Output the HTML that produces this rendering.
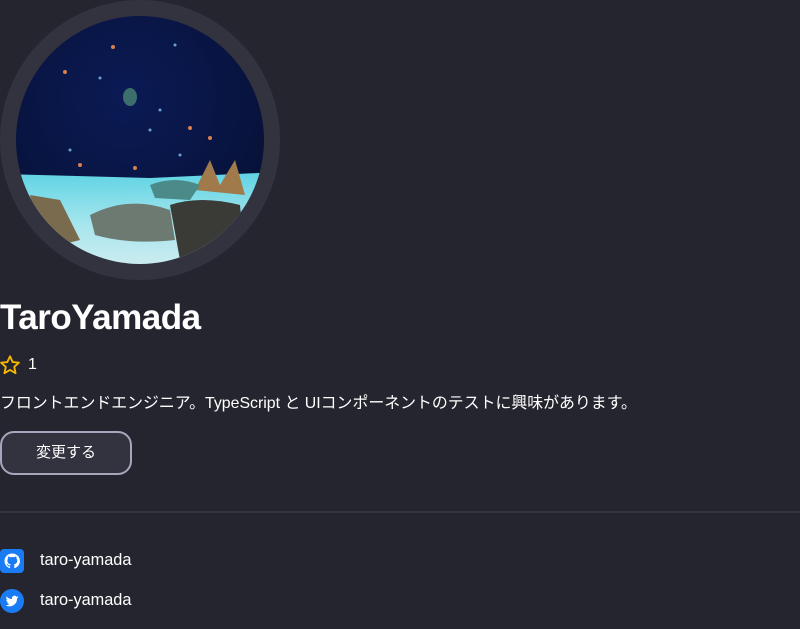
<!DOCTYPE html>
<html><head><meta charset="utf-8"><style>
html,body{margin:0;padding:0;background:#25252f;width:800px;height:629px;overflow:hidden;color:#fff;font-family:"Liberation Sans","Noto Sans CJK JP",sans-serif}
.av{position:absolute;left:0;top:0;width:280px;height:280px}
h1{position:absolute;left:0;top:296px;margin:0;font-size:35px;font-weight:bold;letter-spacing:-0.5px;line-height:44px}
.star{position:absolute;left:-1px;top:354px}
.cnt{position:absolute;left:28px;top:356px;font-size:16px}
.bio{position:absolute;left:0;top:394px;font-size:15.9px;line-height:20px;white-space:nowrap}
.btn{position:absolute;left:0;top:431px;width:128px;height:40px;border:2px solid #a9a5bd;border-radius:14px;background:#33323f;box-sizing:content-box;font-size:15px;text-align:center;line-height:40px}
.hr{position:absolute;left:0;top:511px;width:800px;height:2px;background:#34343f}
.ic{position:absolute;left:0;width:24px;height:24px}
.lk{position:absolute;left:40px;font-size:16.3px}
</style></head><body>
<svg class="av" viewBox="0 0 280 280">
<defs>
<radialGradient id="w" cx="0.45" cy="0.35" r="0.7"><stop offset="0" stop-color="#0b1a55"/><stop offset="0.6" stop-color="#081440"/><stop offset="1" stop-color="#061030"/></radialGradient>
<linearGradient id="s" x1="0" y1="0" x2="0" y2="1"><stop offset="0" stop-color="#5fd3e3"/><stop offset="0.5" stop-color="#a8e6ee"/><stop offset="1" stop-color="#d8eef0"/></linearGradient>
<clipPath id="c"><circle cx="140" cy="140" r="124"/></clipPath>
</defs>
<circle cx="140" cy="140" r="140" fill="#33323f"/>
<g clip-path="url(#c)">
<rect x="0" y="0" width="280" height="280" fill="url(#w)"/>
<path d="M0 174 L150 178 L280 172 L280 280 L0 280Z" fill="url(#s)"/>
<path d="M90 215 Q130 195 170 210 L175 240 Q130 245 95 235Z" fill="#6d7a72"/>
<path d="M170 205 Q200 195 240 205 L245 260 L180 260Z" fill="#3a3a36"/>
<path d="M195 190 L210 160 L220 185 L235 160 L245 195Z" fill="#a07a4a"/>
<path d="M30 195 L60 200 L80 240 L40 250Z" fill="#7a6a4e"/>
<path d="M150 185 Q175 175 200 185 L190 200 L155 198Z" fill="#4a8a88"/>
<ellipse cx="130" cy="97" rx="7" ry="9" fill="#3c6f6c"/>
<g fill="#d98050"><circle cx="65" cy="72" r="2"/><circle cx="80" cy="165" r="2"/><circle cx="210" cy="138" r="2"/><circle cx="190" cy="128" r="2"/><circle cx="113" cy="47" r="2"/><circle cx="135" cy="168" r="2"/></g>
<g fill="#6aa0d0"><circle cx="100" cy="78" r="1.5"/><circle cx="160" cy="110" r="1.5"/><circle cx="180" cy="155" r="1.5"/><circle cx="150" cy="130" r="1.5"/><circle cx="70" cy="150" r="1.5"/><circle cx="175" cy="45" r="1.5"/></g>
</g>
</svg>
<h1>TaroYamada</h1>
<svg class="star" width="22" height="22" viewBox="0 0 24 24"><path d="M12 2.5l2.9 6.3 6.8.7-5.1 4.6 1.5 6.8L12 17.4l-6.1 3.5 1.5-6.8L2.3 9.5l6.8-.7z" fill="none" stroke="#f5b800" stroke-width="2" stroke-linejoin="round"/></svg>
<div class="cnt">1</div>
<div class="bio">フロントエンドエンジニア。TypeScript と UIコンポーネントのテストに興味があります。</div>
<div class="btn">変更する</div>
<div class="hr"></div>
<svg class="ic" style="top:549px" viewBox="0 0 24 24"><rect width="24" height="24" rx="4" fill="#1a7cf5"/><path d="M12 4.5a7.5 7.5 0 0 0-2.4 14.6c.4.1.5-.2.5-.4v-1.4c-2.1.5-2.5-.9-2.5-.9-.3-.9-.8-1.1-.8-1.1-.7-.5.1-.5.1-.5.8.1 1.2.8 1.2.8.7 1.2 1.8.8 2.2.6.1-.5.3-.8.5-1-1.7-.2-3.4-.8-3.4-3.7 0-.8.3-1.5.8-2-.1-.2-.3-1 .1-2 0 0 .6-.2 2.1.8a7 7 0 0 1 3.8 0c1.4-1 2.1-.8 2.1-.8.4 1 .2 1.8.1 2 .5.5.8 1.2.8 2 0 2.9-1.8 3.5-3.4 3.7.3.2.5.7.5 1.4v2.1c0 .2.1.5.5.4A7.5 7.5 0 0 0 12 4.5z" fill="#fff"/></svg>
<div class="lk" style="top:551px">taro-yamada</div>
<svg class="ic" style="top:589px" viewBox="0 0 24 24"><circle cx="12" cy="12" r="12" fill="#1a7cf5"/><path d="M18.5 8.2c-.5.2-1 .4-1.5.4.6-.3 1-.9 1.2-1.5-.5.3-1.1.5-1.7.6a2.6 2.6 0 0 0-4.5 2.4 7.4 7.4 0 0 1-5.4-2.7 2.6 2.6 0 0 0 .8 3.5c-.4 0-.8-.1-1.2-.3 0 1.3.9 2.3 2.1 2.6-.4.1-.8.1-1.2 0 .3 1 1.3 1.8 2.4 1.8a5.3 5.3 0 0 1-3.9 1.1 7.4 7.4 0 0 0 11.4-6.6c.6-.4 1-.8 1.5-1.3z" fill="#fff"/></svg>
<div class="lk" style="top:591px">taro-yamada</div>
</body></html>
